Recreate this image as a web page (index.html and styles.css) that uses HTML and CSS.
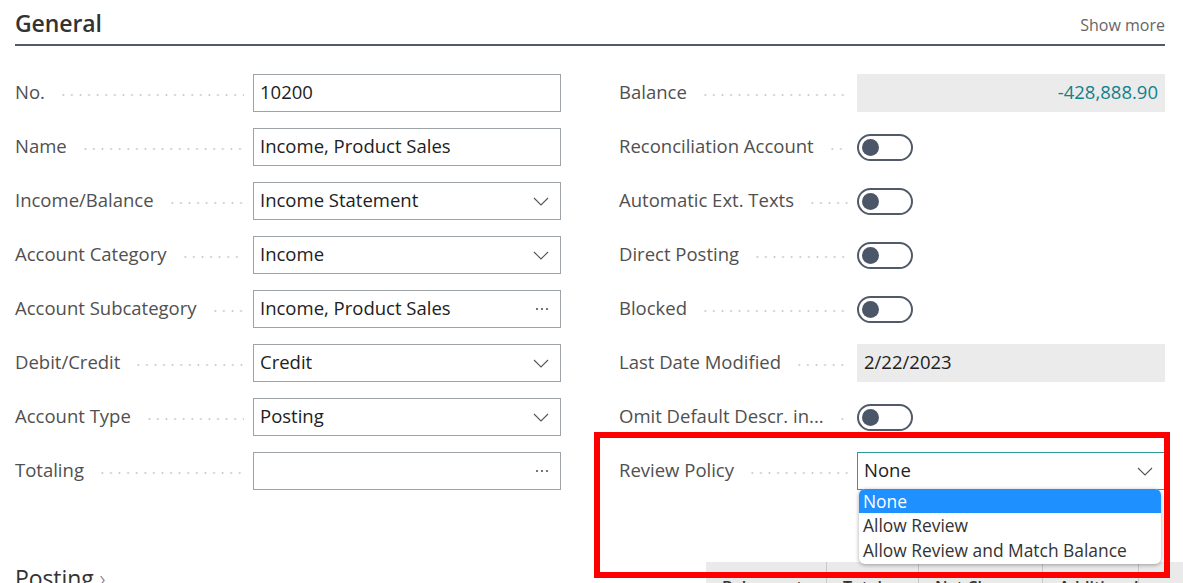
FILE: index.html
```html
<!DOCTYPE html>
<html lang="en">
<head>
    <meta charset="UTF-8">
    <meta name="viewport" content="width=device-width, initial-scale=1.0">
    <title>G/L Account Card</title>
    <link rel="stylesheet" href="styles.css">
</head>
<body>
    <div class="page">
        <section class="fasttab">
            <header class="tab-head">
                <h2>General</h2>
                <a class="show-more">Show more</a>
            </header>

            <div class="fields">
                <div class="col">
                    <div class="field">
                        <span class="caption">No.<i class="leader"></i></span>
                        <div class="control input"><span class="value">10200</span></div>
                    </div>
                    <div class="field">
                        <span class="caption">Name<i class="leader"></i></span>
                        <div class="control input"><span class="value">Income, Product Sales</span></div>
                    </div>
                    <div class="field">
                        <span class="caption">Income/Balance<i class="leader"></i></span>
                        <div class="control input select">
                            <span class="value">Income Statement</span>
                            <svg class="chevron" viewBox="0 0 16 9"><path d="M1 1l7 7 7-7"/></svg>
                        </div>
                    </div>
                    <div class="field">
                        <span class="caption">Account Category<i class="leader"></i></span>
                        <div class="control input select">
                            <span class="value">Income</span>
                            <svg class="chevron" viewBox="0 0 16 9"><path d="M1 1l7 7 7-7"/></svg>
                        </div>
                    </div>
                    <div class="field">
                        <span class="caption">Account Subcategory<i class="leader"></i></span>
                        <div class="control input lookup">
                            <span class="value">Income, Product Sales</span>
                            <svg class="dots" viewBox="0 0 14 4"><circle cx="2" cy="2" r="1.1"/><circle cx="7" cy="2" r="1.1"/><circle cx="12" cy="2" r="1.1"/></svg>
                        </div>
                    </div>
                    <div class="field">
                        <span class="caption">Debit/Credit<i class="leader"></i></span>
                        <div class="control input select">
                            <span class="value">Credit</span>
                            <svg class="chevron" viewBox="0 0 16 9"><path d="M1 1l7 7 7-7"/></svg>
                        </div>
                    </div>
                    <div class="field">
                        <span class="caption">Account Type<i class="leader"></i></span>
                        <div class="control input select">
                            <span class="value">Posting</span>
                            <svg class="chevron" viewBox="0 0 16 9"><path d="M1 1l7 7 7-7"/></svg>
                        </div>
                    </div>
                    <div class="field">
                        <span class="caption">Totaling<i class="leader"></i></span>
                        <div class="control input lookup">
                            <span class="value"></span>
                            <svg class="dots" viewBox="0 0 14 4"><circle cx="2" cy="2" r="1.1"/><circle cx="7" cy="2" r="1.1"/><circle cx="12" cy="2" r="1.1"/></svg>
                        </div>
                    </div>
                </div>

                <div class="col">
                    <div class="field">
                        <span class="caption">Balance<i class="leader"></i></span>
                        <div class="control readonly amount"><span class="value">-428,888.90</span></div>
                    </div>
                    <div class="field">
                        <span class="caption">Reconciliation Account<i class="leader"></i></span>
                        <div class="control"><span class="toggle"></span></div>
                    </div>
                    <div class="field">
                        <span class="caption">Automatic Ext. Texts<i class="leader"></i></span>
                        <div class="control"><span class="toggle"></span></div>
                    </div>
                    <div class="field">
                        <span class="caption">Direct Posting<i class="leader"></i></span>
                        <div class="control"><span class="toggle"></span></div>
                    </div>
                    <div class="field">
                        <span class="caption">Blocked<i class="leader"></i></span>
                        <div class="control"><span class="toggle"></span></div>
                    </div>
                    <div class="field">
                        <span class="caption">Last Date Modified<i class="leader"></i></span>
                        <div class="control readonly"><span class="value">2/22/2023</span></div>
                    </div>
                    <div class="field">
                        <span class="caption">Omit Default Descr. in...<i class="leader"></i></span>
                        <div class="control"><span class="toggle"></span></div>
                    </div>
                    <div class="field">
                        <span class="caption">Review Policy<i class="leader"></i></span>
                        <div class="control input select focused">
                            <span class="value">None</span>
                            <svg class="chevron" viewBox="0 0 16 9"><path d="M1 1l7 7 7-7"/></svg>
                            <ul class="listbox">
                                <li class="selected">None</li>
                                <li>Allow Review</li>
                                <li>Allow Review and Match Balance</li>
                            </ul>
                        </div>
                    </div>
                </div>
            </div>
        </section>

        <section class="fasttab collapsed">
            <header class="tab-head">
                <h2>Posting <span class="arrow">&rsaquo;</span></h2>
                <div class="strip">
                    <span class="cell">Balance at</span>
                    <span class="cell">Total</span>
                    <span class="cell">Net Change</span>
                    <span class="cell">Additional</span>
                </div>
            </header>
        </section>

        <div class="highlight"></div>
    </div>
</body>
</html>
```

FILE: styles.css
```css
body {
    margin: 0;
    font-family: 'Open Sans', 'Noto Sans', Arial, sans-serif;
    font-size: 18.5px;
    color: #212121;
    background-color: white;
    overflow: hidden;
}
.page {
    position: relative;
    padding: 0 18px 0 15px;
}
.tab-head {
    display: flex;
    align-items: flex-end;
    justify-content: space-between;
    height: 44px;
    border-bottom: 2px solid #505a68;
}
.tab-head h2 {
    margin: 0 0 5px 0;
    font-size: 23px;
    font-weight: 600;
    color: #333;
    letter-spacing: -0.1px;
}
.show-more {
    margin-bottom: 8px;
    font-size: 16px;
    color: #666;
}
.fields {
    display: grid;
    grid-template-columns: 1fr 1fr;
    column-gap: 58px;
    padding-top: 28px;
}
.col {
    display: flex;
    flex-direction: column;
    gap: 16px;
}
.field {
    display: grid;
    grid-template-columns: 238px 1fr;
    align-items: center;
    height: 38px;
}
.caption {
    display: flex;
    align-items: center;
    color: #505050;
    white-space: nowrap;
    line-height: 24px;
    padding-bottom: 2px;
}
.leader {
    flex: 1;
    height: 4px;
    margin: 5px 9px 0 14px;
    background-image: radial-gradient(circle, #c8c8c8 0.8px, transparent 1.2px);
    background-size: 8.6px 4px;
    background-repeat: repeat-x;
    background-position: left center;
}
.control {
    position: relative;
    display: flex;
    align-items: center;
    height: 38px;
    box-sizing: border-box;
}
.input {
    border: 1px solid #9ea3a8;
    padding: 0 11px 0 6px;
}
.value {
    flex: 1;
    white-space: nowrap;
    line-height: 24px;
    padding-bottom: 2px;
}
.chevron {
    width: 16px;
    height: 9px;
    fill: none;
    stroke: #555;
    stroke-width: 1.1;
}
.dots {
    width: 14px;
    height: 4px;
    fill: #555;
}
.readonly {
    background-color: #ebebeb;
    padding: 0 7px;
}
.amount .value {
    text-align: right;
    color: #12818c;
}
.toggle {
    position: relative;
    width: 56px;
    height: 27px;
    box-sizing: border-box;
    border: 2px solid #505a68;
    border-radius: 14px;
}
.toggle::before {
    content: '';
    position: absolute;
    left: 3px;
    top: 3px;
    width: 17px;
    height: 17px;
    border-radius: 50%;
    background-color: #4b5668;
}
.focused {
    border-color: #2e9c98;
}
.listbox {
    position: absolute;
    top: 100%;
    left: 1px;
    right: 3px;
    margin: 0;
    padding: 0 0 1px 0;
    list-style: none;
    background-color: white;
    border-radius: 6px;
    box-shadow: 0 1px 4px rgba(0, 0, 0, 0.35);
    overflow: hidden;
    z-index: 2;
    font-size: 17.4px;
}
.listbox li {
    height: 25px;
    line-height: 25px;
    padding: 0 4px;
    color: #333;
}
.listbox li.selected {
    background-color: #1e90ff;
    color: white;
    height: 24px;
    line-height: 24px;
}
.collapsed {
    margin-top: 72px;
}
.collapsed .tab-head {
    border-bottom: none;
    align-items: flex-start;
    height: 40px;
}
.collapsed .tab-head h2 {
    margin: 0;
    font-weight: 400;
}
.arrow {
    color: #777;
    font-weight: 300;
}
.strip {
    display: flex;
    margin-right: -18px;
    background-color: #eaeaea;
    height: 40px;
    width: 477px;
}
.cell {
    padding: 14px 0 0 16px;
    border-right: 1px solid #c8c8c8;
    font-size: 16px;
    font-weight: 600;
    color: #333;
}
.cell:nth-child(1) { width: 104px; }
.cell:nth-child(2) { width: 75px; }
.cell:nth-child(3) { width: 107px; }
.highlight {
    position: absolute;
    left: 594px;
    top: 432px;
    width: 564px;
    height: 134px;
    border: 6px solid #ff0000;
    z-index: 3;
    pointer-events: none;
}
```
